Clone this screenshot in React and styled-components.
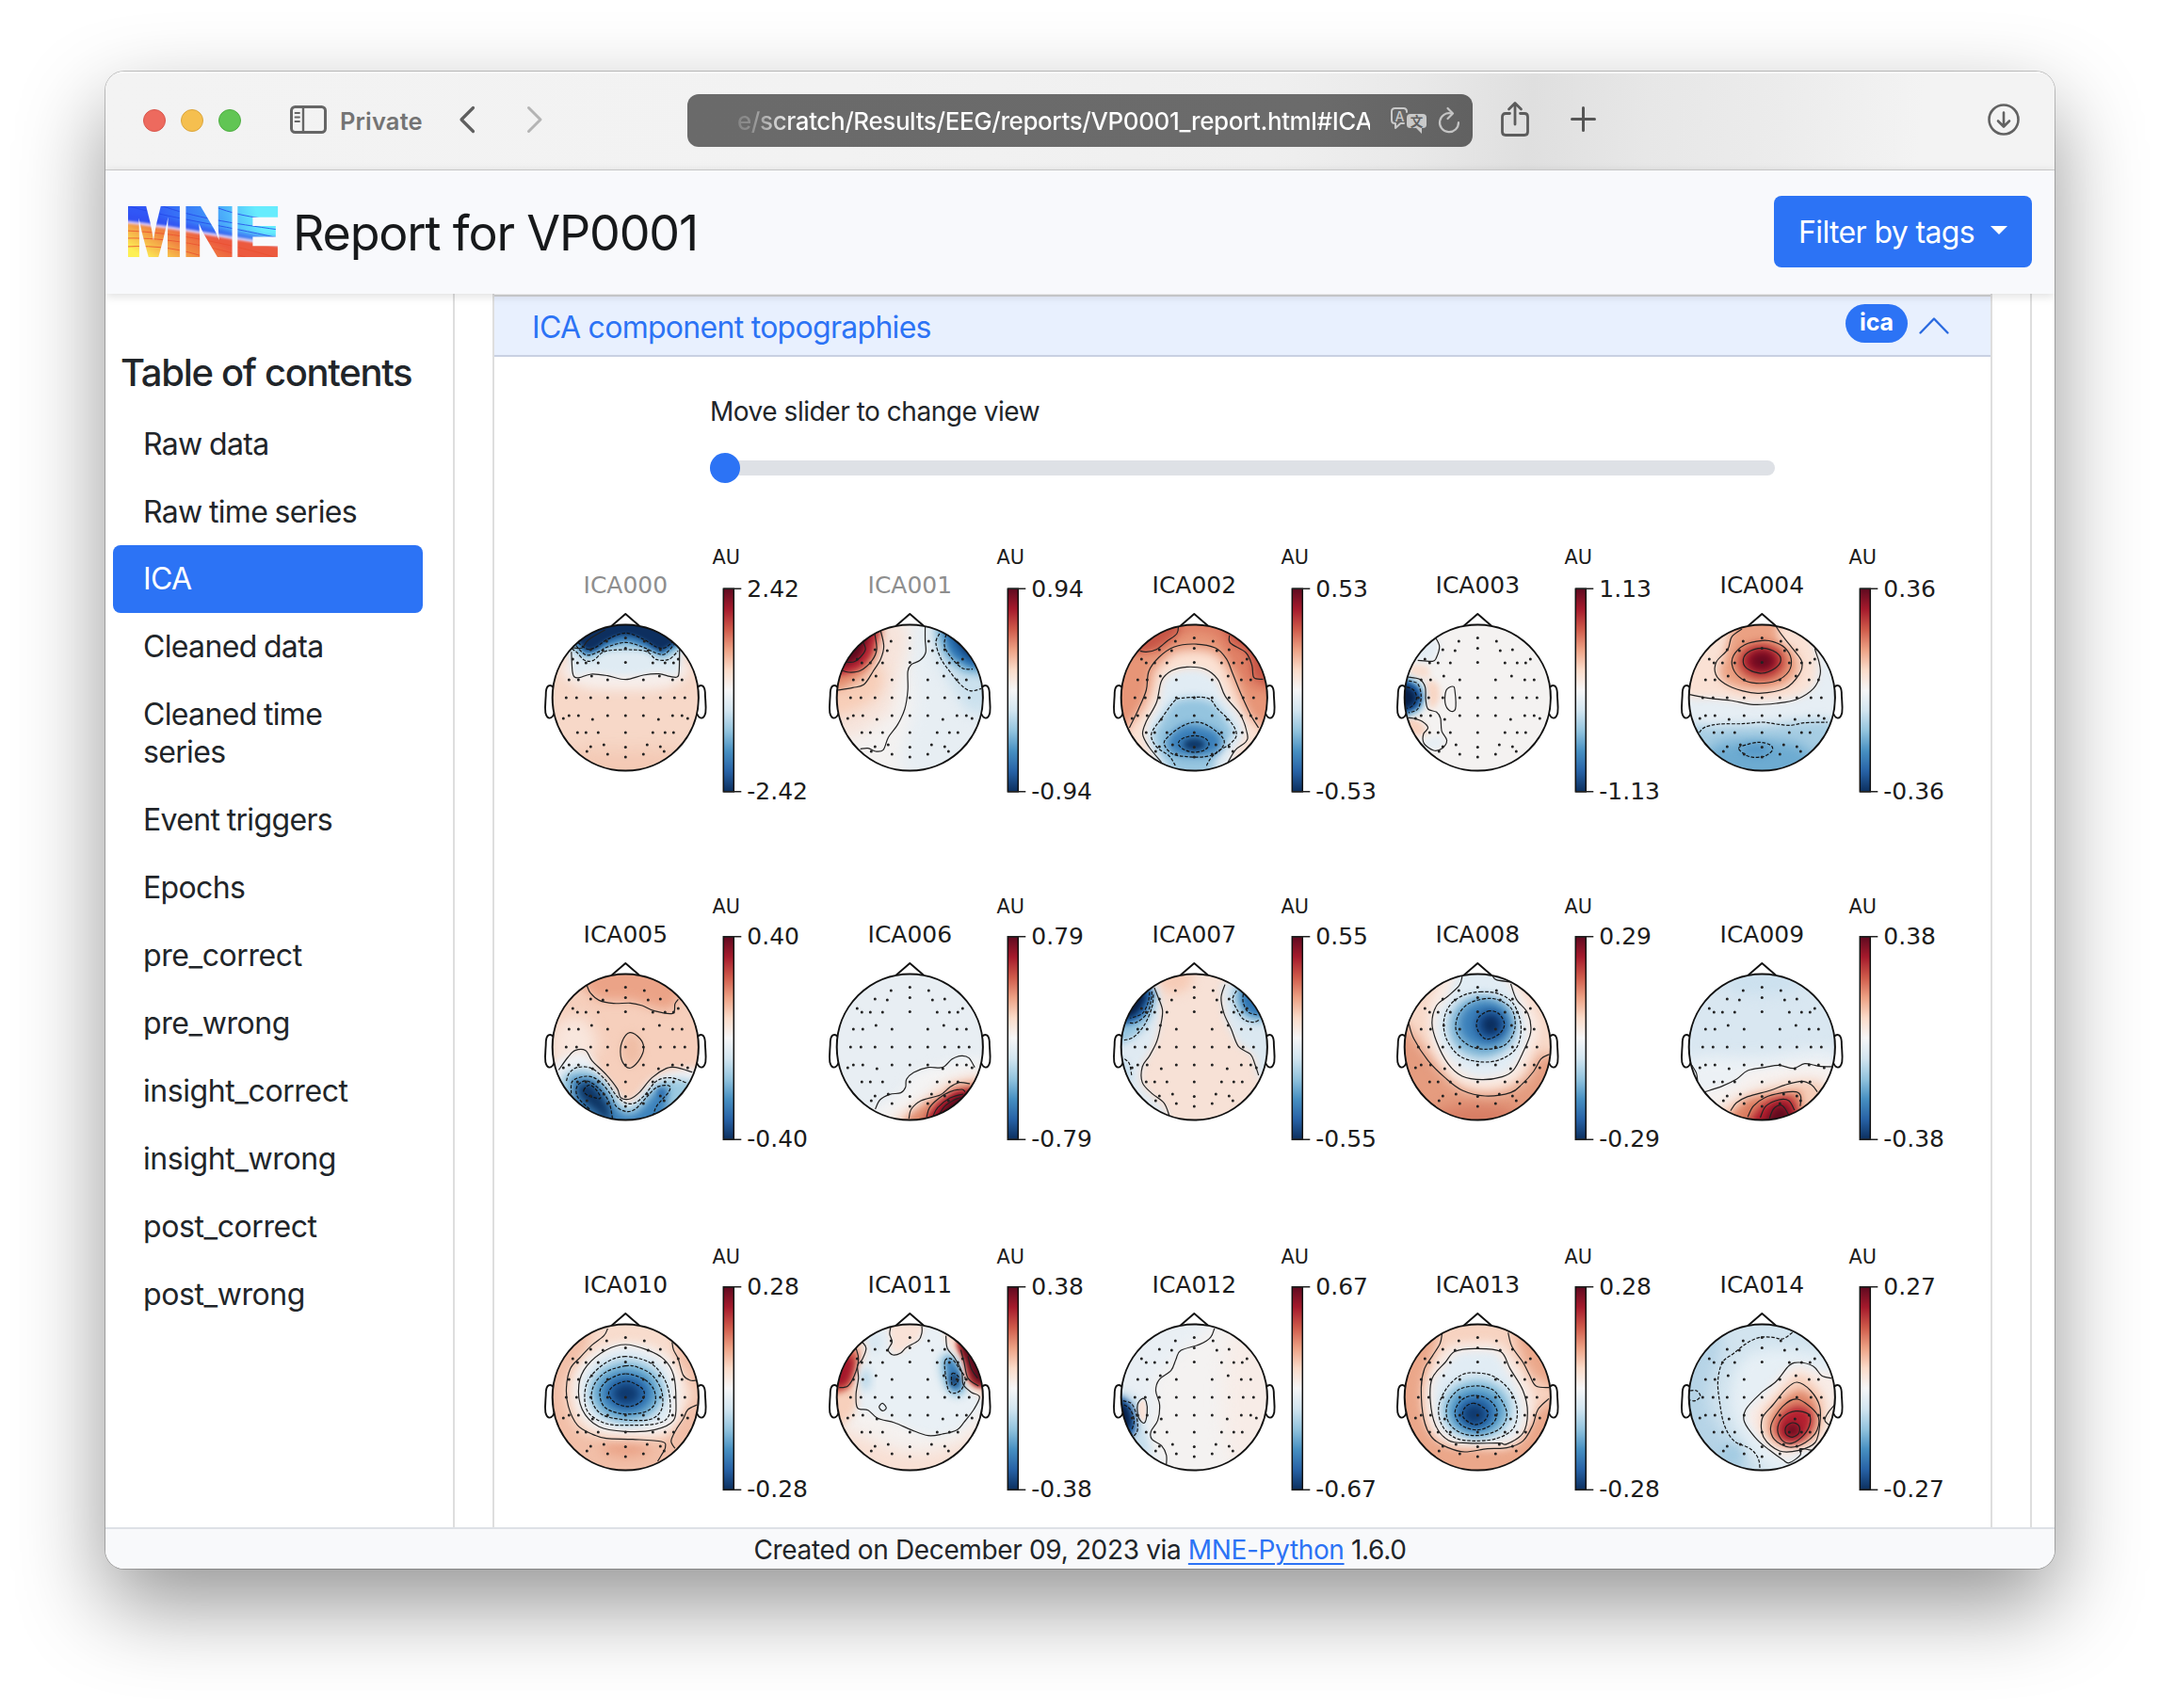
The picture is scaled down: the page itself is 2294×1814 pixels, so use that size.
import React from "react";
import styled, { createGlobalStyle } from "styled-components";

const BLUE = "#2c73f5";
const UI = `Inter, "Liberation Sans", sans-serif`;

const GlobalStyle = createGlobalStyle`
  * { box-sizing: border-box; }
  body { margin: 0; background: #fff; font-family: ${UI}; color: #212529; overflow: hidden; }
`;

const Page = styled.div`
  width: 2294px;
  height: 1814px;
  padding: 76px 0 0 112px;
  overflow: hidden;
`;

const BrowserWindow = styled.div`
  display: flex;
  flex-direction: column;
  width: 2070px;
  height: 1590px;
  border-radius: 20px;
  overflow: hidden;
  background: #fff;
  box-shadow: 0 0 0 1px rgba(0, 0, 0, 0.22), 0 38px 92px rgba(0, 0, 0, 0.42);
`;

const TitleBar = styled.div`
  display: flex;
  align-items: center;
  flex: none;
  height: 105px;
  border-bottom: 1px solid #cfcfcf;
  background: linear-gradient(95deg, #f3f3f3 0%, #f2f2f2 38%, #efefef 60%, #e9e9e9 67%, #dfdfdf 73%, #e7e7e7 79%, #ececec 86%, #f3f3f3 93%);
  box-shadow: inset 0 2px 0 #fafafa;
`;

const Lights = styled.div`
  display: flex;
  gap: 16px;
  margin-left: 40px;
`;

const Light = styled.span`
  width: 24px;
  height: 24px;
  border-radius: 50%;
  background: ${(p) => p.$fill};
  border: 1px solid ${(p) => p.$edge};
`;

const Icon = styled.svg`
  display: block;
  flex: none;
  width: ${(p) => p.$w}px;
  height: ${(p) => p.$h}px;
  margin-left: ${(p) => p.$ml || 0}px;
  margin-bottom: ${(p) => p.$mb || 0}px;
  fill: none;
  stroke: ${(p) => p.$color || "#666"};
  stroke-width: ${(p) => p.$sw || 3};
  stroke-linecap: round;
  stroke-linejoin: round;
  overflow: visible;
`;

const PrivateLabel = styled.span`
  width: 89px;
  margin-left: 14px;
  font-size: 25.5px;
  font-weight: 600;
  letter-spacing: 0.15px;
  color: #747474;
`;

const AddressBar = styled.div`
  display: flex;
  align-items: center;
  width: 834px;
  height: 56px;
  margin-left: 154px;
  padding-right: 14px;
  border-radius: 12px;
  background: linear-gradient(90deg, #6a6a6a 0%, #6b6b6b 80%, #616161 100%);
`;

const Address = styled.span`
  flex: none;
  width: 672px;
  margin-left: 53px;
  white-space: nowrap;
  font-size: 26px;
  font-weight: 500;
  letter-spacing: -0.41px;
  color: transparent;
  background: linear-gradient(90deg, #868686 0, #8f8f8f 15px, #fff 62px);
  -webkit-background-clip: text;
  background-clip: text;
`;

const ReportHeader = styled.header`
  display: flex;
  align-items: center;
  flex: none;
  position: relative;
  z-index: 1;
  height: 131px;
  padding: 0 24px;
  background: #f8f9fc;
  box-shadow: 0 2px 10px rgba(0, 0, 0, 0.14);
`;

const Title = styled.h1`
  margin: 2px auto 0 15px;
  font-size: 52px;
  font-weight: 400;
  letter-spacing: -1.17px;
  color: #17191b;
`;

const FilterButton = styled.button`
  display: flex;
  align-items: center;
  width: 274px;
  height: 76px;
  padding: 0 26px;
  margin-bottom: 1px;
  border: 0;
  border-radius: 8px;
  background: ${BLUE};
  color: #fff;
  font: 400 32px ${UI};
  letter-spacing: -0.62px;
  white-space: nowrap;
`;

const Caret = styled.span`
  margin: -4px 0 0 auto;
  border: 9px solid transparent;
  border-top-color: #fff;
  border-bottom: 0;
`;

const Body = styled.div`
  display: flex;
  flex: 1;
  min-height: 0;
`;

const Sidebar = styled.nav`
  flex: none;
  width: 371px;
  padding: 60px 32px 0 8px;
  border-right: 2px solid #dedede;
`;

const SidebarTitle = styled.h2`
  margin: 0 0 40px 8px;
  font-size: 40px;
  line-height: 48px;
  height: 24px;
  font-weight: 500;
  letter-spacing: -1.32px;
  white-space: nowrap;
`;

const TocItem = styled.a`
  display: block;
  padding: 16px 90px 16px 32px;
  margin-top: ${(p) => (p.$active ? -1 : 0)}px;
  border-radius: 8px;
  font-size: 32px;
  line-height: 40px;
  letter-spacing: ${(p) => (p.$tight ? -0.66 : -0.42)}px;
  word-spacing: -1px;
  white-space: ${(p) => (p.$wrap ? "normal" : "nowrap")};
  color: ${(p) => (p.$active ? "#fff" : "#212529")};
  background: ${(p) => (p.$active ? BLUE : "transparent")};
`;

const Main = styled.main`
  flex: 1;
  min-width: 0;
  margin-right: 24px;
  padding: 0 40px;
  border-right: 2px solid #dedede;
`;

const Accordion = styled.section`
  height: 100%;
  border: 2px solid #dedede;
  border-width: 0 2px;
  overflow: hidden;
`;

const AccordionHeader = styled.div`
  display: flex;
  align-items: center;
  height: 66px;
  margin-top: 1px;
  padding: 0 44px 0 40px;
  border-top: 2px solid #d2d3d5;
  border-bottom: 2px solid #c8d0e2;
  background: #e8f0fe;
  color: ${BLUE};
`;

const AccordionTitle = styled.span`
  padding-top: 3px;
  font-size: 32px;
  letter-spacing: -0.71px;
`;

const Badge = styled.span`
  display: flex;
  justify-content: center;
  align-items: center;
  width: 66px;
  height: 41px;
  margin: 0 12px 5px auto;
  border-radius: 21px;
  background: ${BLUE};
  color: #fff;
  font-size: 25px;
  font-weight: 700;
  padding-bottom: 3px;
`;

const SliderBlock = styled.div`
  width: 1131px;
  margin: 41px 0 0 229px;
  font-size: 28px;
  line-height: 34px;
  letter-spacing: -0.46px;
`;

const Track = styled.div`
  display: flex;
  align-items: center;
  height: 16px;
  margin-top: 35px;
  border-radius: 8px;
  background: #dee1e6;
`;

const Thumb = styled.span`
  width: 32px;
  height: 32px;
  border-radius: 50%;
  background: ${BLUE};
`;

const Figure = styled.div`
  display: grid;
  grid-template-columns: repeat(5, 301.75px);
  grid-auto-rows: 371.3px;
  margin: 65px 0 0 35px;
`;

const Topomap = styled.svg`
  width: 302px;
  height: 371px;
  overflow: visible;
  text { font-family: "DejaVu Sans", sans-serif; font-size: 25px; fill: #1c1c1c; }
`;

const Footer = styled.footer`
  display: flex;
  justify-content: center;
  align-items: center;
  flex: none;
  height: 44px;
  padding-top: 3px;
  border-top: 2px solid #dee1e6;
  background: #f8f9fb;
  font-size: 28px;
  line-height: 39px;
  letter-spacing: -0.35px;
  white-space: pre;
`;

const FooterLink = styled.a`
  color: ${BLUE};
  text-decoration: underline 2px;
  text-underline-offset: 4px;
`;

/* ---- topographic maps ---- */

/* Electrode layout, in pixels from the head centre. */
const HALF = [
  [-20, -60], [-37, -51], [-24, -50], [-56, -41], [-51, -37], [-42, -37], [-29, -37],
  [-36, -23], [-60, -19], [-50, -19], [-19, -19],
  [-63, 0], [-52, 0], [-37, 0], [-19, 0],
  [-60, 19], [-50, 19], [-19, 19], [-66, 22], [-35, 23],
  [-51, 37], [-42, 37], [-29, 37], [-23, 50], [-37, 52], [-41, 57], [-19, 60],
];
const MIDLINE = [-63.5, -52.5, -37.5, 0, 19, 37, 52.5, 63];
const SENSORS = [
  ...HALF,
  ...HALF.map(([x, y]) => [-x, y]),
  ...MIDLINE.map((y) => [0, y]),
];

/* Turns a list of traced points into a smooth path centred on the head. */
function curve(text, [scale, cx, cy]) {
  const closed = text.endsWith("z");
  const p = text.replace("z", "").trim().split(/\s+/).map((s) => {
    const [x, y] = s.split(",").map(Number);
    return [(x - cx) / scale, (y - cy) / 3];
  });
  const n = p.length;
  const at = (i) => (closed ? p[(i + n) % n] : p[Math.max(0, Math.min(n - 1, i))]);
  const f = (v) => v.toFixed(2);
  let d = `M${f(p[0][0])} ${f(p[0][1])}`;
  for (let i = 0; i < (closed ? n : n - 1); i += 1) {
    const [a, b, c, e] = [at(i - 1), at(i), at(i + 1), at(i + 2)];
    d += `C${f(b[0] + (c[0] - a[0]) / 6)} ${f(b[1] + (c[1] - a[1]) / 6)} ${f(c[0] - (e[0] - b[0]) / 6)} ${f(c[1] - (e[1] - b[1]) / 6)} ${f(c[0])} ${f(c[1])}`;
  }
  return closed ? `${d}Z` : d;
}

const oval = (x, y, rx, ry) =>
  Array.from({ length: 8 }, (_, i) => {
    const t = (i * Math.PI) / 4;
    return `${x + rx * Math.cos(t)},${y + ry * Math.sin(t)}`;
  }).join(" ") + "z";

const MAPS = [
  {
    name: "ICA000", max: "2.42", muted: true, at: [1.8447, 285, 1084], base: "#f7d8c8",
    fills: [
      ["#f6eeeb", 6, "160,1000 200,1050 285,1060 370,1050 410,1000 380,960 190,960z"],
      ["#f3c8b3", 10, "180,1260 285,1250 400,1260 380,1340 190,1340z"],
      ["#dfebf3", 3, "176,900 182,1000 190,1014 218,1003 285,1014 350,1003 382,1012 388,1000 394,900 285,840z"],
      ["#8dc0dc", 3, "170,890 182,930 205,958 222,958 240,938 262,930 310,930 330,938 345,955 370,955 400,890 285,820z"],
      ["#3579b5", 2, "170,880 190,918 208,945 232,935 250,920 285,905 318,920 345,939 362,942 390,890 285,810z"],
      ["#0d2f5f", 2, "160,870 192,905 208,930 225,928 250,900 285,884 320,900 345,926 362,927 400,870 285,800z"],
    ],
    lines: ["179,938 181,1000 185,1018 195,1020 218,1009 250,1014 285,1026 320,1012 350,1008 372,1016 386,1018 390,1000 391,930", "180,925 200,925 212,900 245,868"],
    dashed: [
      "180,928 190,940 205,965 222,965 240,940 262,932 310,932 330,940 345,962 370,962 388,935",
      "188,918 208,948 232,938 250,922 285,908 318,922 345,942 362,945 380,915",
      "192,908 208,928 225,925 250,898 285,878 320,898 345,922 362,925 378,905",
    ],
  },
  {
    name: "ICA001", max: "0.94", muted: true, at: [1.8447, 842, 1084], base: "#f4f2f1",
    fills: [
      ["#e7eef3", 8, "850,850 850,1100 830,1320 1000,1320 1000,850z"],
      ["#f6e3da", 8, "690,840 830,850 815,1050 790,1150 690,1200z"],
      ["#f7cdb7", 7, "690,950 740,1000 785,980 785,1060 740,1120 680,1130z"],
      ["#cbe1ee", 7, "895,850 900,960 930,1060 960,1130 1000,1100 1000,850z"],
      ["#e38c6e", 4, "690,1045 730,1035 765,990 783,920 780,850 690,860z"],
      ["#b42433", 3, "690,1000 735,998 762,960 772,920 776,850 690,860z"],
      ["#5f0a1e", 3, "700,975 735,965 752,925 756,880 690,870z"],
      ["#7db5d5", 4, "900,850 903,930 930,985 965,1010 1010,990 1000,850z"],
      ["#2d74b3", 3, "912,840 917,925 940,968 975,985 1010,900z"],
      ["#134580", 3, "922,840 935,920 970,965 1000,900z"],
    ],
    lines: [
      "785,872 791,920 785,960 770,1000 752,1042 730,1052 700,1060",
      "773,878 777,930 768,965 745,998 722,1003 708,996",
      "750,905 755,930 745,955 732,970 715,970",
      "872,858 872,900 873,940 862,965 845,978 838,1000 838,1060 832,1120 818,1170 800,1210 790,1250 775,1255 760,1245 745,1247",
    ],
    dashed: [
      "900,880 893,910 903,960 920,1000 940,1040 960,1062 982,1055",
      "913,882 910,920 925,960 945,990 965,993",
    ],
  },
  {
    name: "ICA002", max: "0.53", at: [1.8447, 1399, 1084], base: "#e79577",
    fills: [
      ["#df7f65", 5, "1260,860 1330,940 1380,880 1440,890 1480,990 1520,1060 1560,1030 1540,840 1399,840z"],
      ["#c65546", 4, "1270,930 1305,938 1345,905 1370,850 1270,840z"],
      ["#c65546", 4, "1465,850 1470,900 1505,945 1518,1020 1560,1030 1550,860z"],
      ["#fbe2d4", 6, "1260,1210 1296,1120 1312,1060 1320,1000 1340,965 1362,938 1399,930 1436,940 1456,970 1470,1010 1486,1070 1506,1140 1540,1200 1540,1340 1260,1340z"],
      ["#e1ecf4", 4, "1345,1330 1310,1240 1302,1200 1308,1160 1328,1100 1338,1030 1357,1005 1385,993 1420,1000 1443,1030 1458,1080 1488,1140 1498,1200 1480,1250 1450,1330z"],
      ["#94c4df", 5, "1362,1320 1325,1240 1320,1200 1340,1140 1362,1095 1399,1085 1436,1100 1465,1160 1476,1200 1445,1260 1430,1320z"],
      ["#3b80ba", 4, "1399,1170 1370,1180 1347,1220 1358,1260 1399,1270 1443,1258 1453,1225 1440,1190z"],
      ["#0e3768", 3, oval(1399, 1233, 22, 20)],
    ],
    lines: [
      "1272,1180 1290,1120 1305,1060 1310,1000 1330,955 1360,922 1399,913 1440,925 1462,960 1475,1010 1490,1070 1510,1140 1525,1180",
      "1335,1290 1310,1240 1298,1200 1305,1160 1325,1100 1335,1030 1355,998 1385,986 1420,993 1445,1025 1460,1080 1490,1140 1503,1200 1500,1225 1480,1250 1465,1290",
      "1368,855 1365,880 1345,905 1325,930 1305,938 1293,935",
      "1468,885 1470,910 1500,940 1512,980 1516,1020 1534,1025",
    ],
    dashed: [
      "1362,1300 1350,1270 1325,1240 1315,1200 1335,1150 1360,1095 1375,1085 1425,1085 1445,1120 1470,1160 1482,1200 1470,1230 1445,1255 1430,1280 1422,1305",
      "1399,1162 1375,1175 1350,1205 1340,1230 1355,1262 1385,1272 1420,1272 1445,1258 1458,1225 1445,1195 1420,1168z",
      "1399,1205 1375,1215 1368,1232 1380,1250 1400,1258 1420,1250 1428,1232 1420,1213z",
    ],
  },
  {
    name: "ICA003", max: "1.13", at: [1.6505, 677, 544], base: "#f4f2f1",
    fills: [
      ["#e4edf4", 4, "560,350 603,352 608,390 598,425 560,425z"],
      ["#f8ddcf", 3, "560,440 588,445 590,480 560,470z"],
      ["#f8d5c3", 3, "588,495 606,500 610,545 595,580z"],
      ["#f7d0bd", 3, "545,610 575,618 588,655 575,665 545,660z"],
      ["#e6eef4", 3, "583,690 600,670 620,680 600,710z"],
      ["#8dc0dc", 3, "540,482 570,488 584,520 584,565 570,595 540,600z"],
      ["#1f5fa6", 2, "540,492 565,500 578,528 577,562 566,582 540,590z"],
      ["#071f47", 3, "540,508 558,512 570,540 562,570 540,576z"],
    ],
    lines: [
      "603,352 610,380 605,415 598,428 572,425",
      "633,508 622,520 620,560 628,585 638,580 637,520z",
      "555,478 575,485 585,510 586,550 590,580 605,590 612,610 614,650 623,680 615,705 600,712 583,690 582,660 590,640 580,620 565,610 555,608",
    ],
    dashed: ["556,490 572,500 578,540 572,580 556,592", "553,510 565,520 570,545 563,570 553,578"],
  },
  {
    name: "ICA004", max: "0.36", at: [1.6505, 1175, 544], base: "#e6eef4",
    fills: [
      ["#fae1d4", 5, "1030,528 1100,545 1160,558 1230,543 1262,510 1272,450 1265,380 1240,280 1100,280 1030,400z"],
      ["#eba183", 5, "1135,280 1108,420 1100,460 1115,500 1160,520 1210,508 1238,460 1232,400 1205,360 1195,280z"],
      ["#cd5c4b", 4, oval(1174, 430, 46, 64)],
      ["#a2162a", 4, oval(1174, 427, 31, 41)],
      ["#690a20", 4, oval(1175, 427, 20, 26)],
      ["#a6cde3", 6, "1040,650 1100,636 1175,632 1310,630 1310,820 1040,820z"],
      ["#6dabd1", 7, "1090,700 1175,680 1250,705 1260,800 1090,800z"],
      ["#5698c7", 4, oval(1164, 710, 26, 20)],
    ],
    lines: [
      "1140,325 1122,350 1115,390 1095,430 1094,470 1110,500 1140,522 1170,530 1215,515 1240,470 1245,430 1230,390 1210,345 1200,318",
      "1175,362 1145,375 1125,410 1124,450 1140,485 1165,498 1200,490 1222,460 1226,420 1215,385 1195,366z",
      "1175,386 1150,400 1142,430 1152,455 1175,466 1198,450 1208,425 1200,400z",
      "1048,534 1080,545 1120,553 1160,566 1200,562 1235,550 1265,515 1277,470 1275,430 1268,390 1270,370",
    ],
    dashed: [
      "1065,655 1075,638 1100,628 1140,627 1175,622 1200,628 1225,632 1250,624 1290,622",
      "1134,705 1145,695 1170,686 1190,695 1193,712 1180,730 1160,734 1145,725z",
    ],
  },
  {
    name: "ICA005", max: "0.40", at: [1.96, 205, 547], base: "#f6cfbc",
    fills: [
      ["#eba387", 6, "110,300 135,380 160,398 215,400 265,420 300,425 320,360 300,280z"],
      ["#f8e6dd", 8, "60,480 110,450 140,500 140,570 60,600z"],
      ["#efbda5", 5, oval(218, 555, 20, 50)],
      ["#eef1f5", 4, "50,620 90,570 125,568 150,620 185,690 205,718 225,710 260,650 310,620 365,635 350,820 50,820z"],
      ["#9ccae1", 4, "70,660 98,620 130,620 170,672 200,735 230,728 262,672 292,652 350,670 330,820 80,820z"],
      ["#3c82bb", 4, "92,660 112,645 145,655 175,720 205,762 235,748 262,700 290,676 292,700 270,810 130,810z"],
      ["#0e3564", 4, "105,675 130,662 152,695 170,740 170,790 150,760 115,715z"],
      ["#2768aa", 3, oval(280, 692, 9, 16)],
    ],
    lines: [
      "125,352 132,375 150,398 180,408 215,407 240,415 265,432 303,440 308,410 315,395",
      "214,501 198,530 195,575 205,608 218,612 235,585 243,550 235,520z",
      "66,620 85,580 100,558 122,558 135,590 165,635 188,680 195,708 215,712 235,690 260,645 290,615 310,612 344,627",
    ],
    dashed: [
      "82,655 88,630 105,612 135,615 165,655 185,700 205,725 225,725 245,700 270,655 300,645 333,662",
      "92,695 95,655 125,640 150,655 175,700 185,735 205,752 225,745 250,705 270,675 295,670 295,690 270,735 262,770",
      "130,745 105,705 105,670 125,655 150,680 170,720 178,775",
      "118,685 130,668 145,685 153,710 140,708 125,700z",
    ],
  },
  {
    name: "ICA006", max: "0.79", at: [1.96, 797, 547], base: "#e8eef3",
    fills: [
      ["#f4f3f3", 6, "710,770 780,690 805,635 880,600 970,600 960,820 720,820z"],
      ["#f8dacb", 6, "760,800 825,712 890,650 970,650 960,820z"],
      ["#df886b", 4, "792,800 828,728 868,700 898,668 970,670 950,820z"],
      ["#ac1a2c", 3, "832,800 850,735 880,698 905,684 970,690 930,820z"],
      ["#5f0a1e", 3, "850,790 875,728 905,700 950,700 900,800z"],
    ],
    lines: [
      "725,745 735,715 755,698 778,693 788,675 790,650 805,628 835,612 865,612 885,585 905,575 920,582 932,612",
      "795,775 800,745 820,718 860,700 880,675 900,660 922,664",
      "832,770 838,740 858,710 880,690 905,682 912,690",
      "845,768 855,740 880,710 908,697",
      "858,762 870,735 890,715 903,708",
    ],
    dashed: [],
  },
  {
    name: "ICA007", max: "0.55", at: [1.96, 1388, 547], base: "#f7e1d6",
    fills: [
      ["#f6cbb6", 6, "1310,300 1380,300 1375,360 1330,370z"],
      ["#dfeaf2", 4, "1300,340 1317,430 1306,530 1280,610 1280,670 1330,770 1200,760 1200,350z"],
      ["#dbe8f1", 4, "1455,340 1448,400 1456,470 1484,540 1512,575 1525,650 1570,600 1560,350z"],
      ["#c2dbeb", 3, "1230,580 1250,600 1258,650 1230,640z"],
      ["#94c4df", 4, "1230,350 1305,380 1300,440 1280,490 1250,525 1220,525z"],
      ["#2468ad", 3, "1225,350 1300,365 1296,405 1278,455 1230,470z"],
      ["#071f47", 3, "1225,370 1284,375 1280,415 1258,450 1225,450z"],
      ["#84b9d8", 4, "1480,350 1472,400 1490,450 1520,468 1560,440 1540,350z"],
      ["#2f76b4", 3, "1495,350 1487,405 1508,442 1550,440z"],
    ],
    lines: [
      "1305,358 1312,385 1322,430 1318,480 1310,530 1295,575 1280,610 1280,660 1300,695 1325,725 1336,765",
      "1452,348 1444,390 1450,440 1465,490 1480,545 1505,570 1514,600 1522,637",
    ],
    dashed: [
      "1303,380 1300,420 1285,475 1262,515 1242,525",
      "1300,370 1298,400 1290,440 1268,468 1250,470",
      "1295,372 1292,405 1280,440 1255,455",
      "1476,368 1468,395 1478,430 1490,458 1510,468 1524,460",
      "1490,378 1490,405 1500,435 1520,445",
      "1243,585 1253,600 1258,640",
    ],
  },
  {
    name: "ICA008", max: "0.29", at: [1.6505, 677, 547], base: "#e59c7f",
    fills: [
      ["#d77c63", 8, oval(677, 780, 80, 50)],
      ["#f8d9c9", 7, "540,440 570,520 600,590 640,670 690,695 735,680 770,630 785,575 830,550 820,280 540,280z"],
      ["#f9ebe4", 5, "600,380 590,470 605,570 640,650 690,675 740,650 770,570 785,480 760,380 730,290 640,290z"],
      ["#e1ecf4", 4, "652,290 622,395 605,440 605,520 630,590 660,632 690,642 730,622 755,560 764,480 750,400 730,345 705,290z"],
      ["#84b9d8", 5, oval(685, 482, 60, 102)],
      ["#3b80ba", 5, oval(690, 474, 46, 74)],
      ["#174a8a", 4, oval(699, 476, 26, 46)],
      ["#0b2f60", 3, oval(700, 476, 13, 26)],
    ],
    lines: [
      "650,322 645,350 625,385 605,415 597,470 605,530 625,600 650,640 685,651 720,642 740,620 755,570 770,500 765,440 745,395 735,345",
      "703,320 710,333 735,340",
      "556,470 565,520 590,590 620,645 650,685 690,703 735,692 755,665 775,625 788,585 803,570",
    ],
    dashed: [
      "684,371 655,380 630,410 618,460 622,520 645,575 680,594 715,588 745,550 753,480 740,410 715,378z",
      "690,393 660,410 642,450 640,500 660,540 690,554 725,540 742,490 738,430 715,398z",
      "698,432 680,450 675,480 683,510 695,522 715,505 724,475 715,442z",
    ],
  },
  {
    name: "ICA009", max: "0.38", at: [1.6505, 1175, 547], base: "#d9e7f1",
    fills: [
      ["#cbe0ee", 8, oval(1175, 340, 70, 40)],
      ["#ecf1f5", 8, "1040,600 1175,580 1310,570 1310,820 1040,820z"],
      ["#f6f1ef", 5, "1060,710 1125,665 1160,625 1310,615 1310,820 1060,820z"],
      ["#f6cdb8", 6, "1095,760 1145,700 1240,655 1290,680 1270,820 1080,820z"],
      ["#dd8063", 4, "1120,800 1145,720 1185,700 1230,690 1243,700 1235,820z"],
      ["#b01c2d", 4, "1155,800 1172,740 1200,712 1228,712 1236,770 1220,810z"],
      ["#5f0a1e", 4, "1180,800 1197,742 1212,735 1226,770 1210,810z"],
    ],
    lines: [
      "1075,690 1105,672 1130,650 1150,622 1180,612 1205,605 1230,615 1250,600 1275,608 1300,610",
      "1120,750 1130,725 1150,705 1190,685 1215,668 1245,656 1262,668 1272,690",
      "1150,770 1160,735 1180,708 1210,693 1235,690 1243,705 1242,735",
      "1172,772 1182,735 1205,715 1222,718 1232,748",
      "1188,775 1195,745 1208,732 1216,745 1222,765",
      "1052,605 1060,630 1062,655",
    ],
    dashed: [],
  },
  {
    name: "ICA010", max: "0.28", at: [1.96, 205, 551], base: "#f2bfa8",
    fills: [
      ["#e99f83", 7, oval(205, 710, 50, 28)],
      ["#f8dccd", 6, "160,290 120,410 90,470 80,540 100,640 150,680 280,685 310,620 350,550 330,480 310,420 300,300z"],
      ["#f6efec", 5, "200,375 150,395 110,450 95,520 105,600 140,655 200,670 280,665 315,620 325,520 300,430 255,385z"],
      ["#e1ecf4", 4, "205,392 165,408 128,452 112,510 119,590 152,637 205,650 262,646 298,620 304,560 298,480 280,436 248,406z"],
      ["#98c7e0", 5, oval(208, 533, 80, 102)],
      ["#599ec9", 5, oval(207, 536, 65, 80)],
      ["#2869ab", 5, oval(208, 538, 48, 58)],
      ["#0f3a70", 4, oval(207, 540, 27, 33)],
    ],
    lines: [
      "168,332 160,355 135,385 110,425 90,460 82,520 86,580 105,640 135,668 165,682 220,685 280,692 288,710 280,735 272,755",
      "302,375 305,400 315,430 325,480 340,497 352,497",
      "354,575 335,590 325,620 310,655 300,690 308,714",
      "205,383 165,400 125,450 108,510 115,590 150,645 205,660 265,655 305,625 310,560 305,480 285,430 250,400z",
    ],
    dashed: [
      "205,421 165,440 130,490 120,545 128,600 165,635 215,640 270,635 295,610 297,550 285,490 255,440z",
      "205,451 165,470 140,510 135,560 155,605 200,622 255,622 280,590 280,530 260,480 230,455z",
      "205,476 170,495 152,530 160,580 195,603 240,600 265,575 265,530 245,495z",
      "205,500 180,515 170,540 185,570 215,580 240,560 243,530 225,508z",
    ],
  },
  {
    name: "ICA011", max: "0.38", at: [1.96, 797, 551], base: "#e9f0f5",
    fills: [
      ["#f5f1ef", 5, "630,600 720,605 765,632 835,673 900,655 935,600 980,580 960,820 640,820z"],
      ["#f8dfd3", 8, "630,640 700,680 800,730 900,700 960,640 960,820 640,820z"],
      ["#f9e2d7", 3, "755,310 758,370 758,405 775,410 792,392 818,360 822,310z"],
      ["#cfe2ee", 6, oval(725, 375, 12, 30)],
      ["#b3d4e7", 5, oval(705, 495, 10, 35)],
      ["#f7d0bc", 4, "640,350 700,380 698,430 685,470 684,590 630,640z"],
      ["#d2604f", 3, "640,420 685,400 688,440 680,485 668,525 635,530z"],
      ["#a5182b", 3, "640,430 676,425 676,470 662,510 635,510z"],
      ["#9ccae1", 4, "860,430 885,410 915,480 910,540 885,545 865,500z"],
      ["#3b80ba", 3, "872,435 885,432 909,490 903,525 886,528 876,490z"],
      ["#0e3564", 3, oval(889, 495, 8, 20)],
      ["#f9ddcf", 3, "875,340 882,395 905,440 909,500 930,535 970,560 980,380z"],
      ["#c2413c", 2, "895,370 910,440 920,500 945,522 980,500 960,360z"],
      ["#5f0a1e", 3, "905,380 915,440 930,495 950,510 980,470 950,370z"],
    ],
    lines: [
      "757,328 755,350 760,375 752,400 762,416 778,410 790,392 815,370 822,345 822,325",
      "698,375 706,395 698,430 688,450 690,490 685,540 688,585 710,592 730,618 765,632 800,655 835,673 865,668 895,655 910,630 930,590 942,550 925,535 908,510 905,470 890,425 875,395 872,355",
      "740,570 733,582 740,594 748,585z",
      "685,395 690,430 682,480 668,515 650,520",
      "903,400 910,440 918,490 940,515",
      "918,420 925,460 938,490",
    ],
    dashed: ["870,435 885,430 900,460 912,490 905,525 890,538 878,530 872,490z", "885,475 898,485 895,505 885,512z"],
  },
  {
    name: "ICA012", max: "0.67", at: [1.96, 1388, 551], base: "#f4f2f1",
    fills: [
      ["#f7ece7", 9, "1480,300 1450,550 1480,800 1600,800 1600,300z"],
      ["#e9eff4", 6, "1425,290 1355,410 1305,500 1310,580 1295,680 1325,800 1200,800 1200,290z"],
      ["#c5ddec", 4, "1230,540 1270,560 1282,640 1295,730 1230,700z"],
      ["#f8e2d8", 1, "1280,560 1272,580 1274,612 1283,628 1288,600 1286,568z"],
      ["#1f5fa6", 3, "1225,555 1252,565 1264,610 1264,665 1230,680z"],
      ["#071f47", 3, "1225,575 1247,580 1256,615 1253,650 1230,650z"],
    ],
    lines: [
      "1430,332 1422,360 1400,382 1360,402 1350,430 1340,465 1315,495 1308,530 1316,575 1312,625 1298,660 1300,685 1320,705 1330,735 1330,765",
      "1280,555 1270,575 1272,615 1284,633 1290,600 1288,565z",
    ],
    dashed: ["1240,562 1258,572 1268,610 1270,655 1262,675", "1242,575 1255,590 1263,625 1258,655"],
  },
  {
    name: "ICA013", max: "0.28", at: [1.4519, 595, 551], base: "#eba78a",
    fills: [
      ["#f7d3c1", 6, "550,280 525,420 510,520 515,620 540,690 595,712 650,700 685,600 720,540 680,480 660,400 640,280z"],
      ["#f8ebe5", 5, "590,375 550,390 525,460 514,550 522,650 550,700 595,708 650,700 678,620 680,540 650,430 625,380z"],
      ["#e1ecf4", 4, "590,405 563,413 548,445 530,495 527,560 535,640 555,678 585,688 635,688 658,660 665,600 658,530 640,465 623,412z"],
      ["#98c7e0", 5, oval(594, 588, 54, 97)],
      ["#599ec9", 4, oval(593, 593, 43, 75)],
      ["#2869ab", 4, oval(592, 600, 30, 54)],
      ["#0f3a70", 4, oval(590, 605, 17, 32)],
    ],
    lines: [
      "540,350 537,380 525,420 513,460 508,520 512,620 525,680 550,712 575,725 610,715 640,712 665,690 680,640 688,590 705,555",
      "642,345 648,390 665,440 675,480 685,515 705,520",
      "590,396 560,405 545,440 525,490 522,560 530,640 550,688 580,697 628,697 640,700 665,665 672,600 665,530 645,460 630,405z",
    ],
    dashed: [
      "592,473 570,480 548,520 535,580 540,640 560,680 590,690 625,682 650,650 656,590 645,530 620,485z",
      "590,515 565,528 548,575 550,630 570,665 600,672 630,650 640,600 625,540 610,520z",
      "590,545 570,560 560,600 570,640 595,655 618,635 625,595 612,558z",
      "590,570 575,585 573,615 590,638 606,625 610,595z",
    ],
  },
  {
    name: "ICA014", max: "0.27", at: [1.4519, 1033, 551], base: "#d2e4ef",
    fills: [
      ["#b5d3e6", 8, "900,340 970,360 950,560 985,700 1015,820 900,800z"],
      ["#9fc9e1", 7, oval(987, 735, 18, 36)],
      ["#e6eff5", 7, "1010,420 1080,400 1150,460 1160,720 1060,790 1000,660 985,540z"],
      ["#f8ece7", 4, "1088,448 1062,480 1040,535 1013,590 1012,630 1035,690 1070,748 1090,720 1150,660 1160,500 1112,465z"],
      ["#f7cfbb", 5, "1087,480 1055,545 1033,600 1035,670 1062,712 1105,706 1128,650 1130,560 1110,500z"],
      ["#df886b", 4, "1087,530 1062,565 1045,620 1047,670 1070,700 1100,690 1117,650 1118,580 1105,540z"],
      ["#b42030", 4, "1086,580 1065,605 1056,650 1063,685 1082,695 1100,675 1110,635 1107,595z"],
      ["#5f0a1e", 4, oval(1080, 655, 10, 20)],
    ],
    lines: [
      "1140,490 1125,482 1112,452 1090,440 1075,450 1055,500 1030,540 1008,590 1006,630 1025,685 1045,720 1065,750 1075,760 1092,735 1092,715 1110,720",
      "1087,503 1070,525 1050,575 1033,620 1036,680 1060,722 1090,720 1115,695 1122,640 1122,580 1108,530z",
      "1088,557 1065,580 1047,640 1052,685 1075,710 1100,695 1118,655 1118,605z",
      "1085,595 1065,615 1057,655 1065,690 1080,697 1098,670 1107,635 1105,605z",
      "1080,632 1070,645 1070,668 1080,678 1090,665 1090,642z",
      "1145,575 1135,600 1130,625 1140,645",
    ],
    dashed: [
      "1080,345 1065,365 1050,360 1030,360 1010,378 990,410 972,440 965,500 968,570 975,640 990,690 1015,715 1027,745 1030,780",
      "922,530 932,530 938,548 930,562 922,560",
    ],
  },
];

const BLURS = [1, 2, 3, 4, 5, 6, 7, 8, 9, 10];
const SCALE = ["#5f0a20", "#a51a2c", "#cf5a4a", "#eda184", "#fadbc9", "#f6f6f7", "#d2e5f0", "#93c4de", "#4790c2", "#2762a6", "#0c2f5e"];

const DefsHolder = styled.svg`
  display: block;
  width: 0;
  height: 0;
`;

function SharedDefs() {
  return (
    <DefsHolder>
      <defs>
        <clipPath id="head"><circle r="77.6" /></clipPath>
        <linearGradient id="rdbu" x1="0" y1="0" x2="0" y2="1">
          {SCALE.map((c, i) => <stop key={c} offset={i / 10} stopColor={c} />)}
        </linearGradient>
        {BLURS.map((b) => (
          <filter key={b} id={`soft${b}`} x="-60%" y="-60%" width="220%" height="220%" colorInterpolationFilters="sRGB">
            <feGaussianBlur stdDeviation={b} />
          </filter>
        ))}
      </defs>
    </DefsHolder>
  );
}

const MapName = styled.text`
  && { fill: ${(p) => (p.$muted ? "#8e8e8e" : "#1c1c1c")}; }
`;

const UnitLabel = styled.text`
  && { font-size: 20.8px; }
`;

function TopoPlot({ map, row }) {
  const top = row === 0 ? -115.7 : -117.2;
  return (
    <Topomap viewBox="0 0 302 371">
      <g transform="translate(104.3 171)">
        <g fill="#fff" stroke="#111" strokeWidth="1.9" strokeLinejoin="round">
          <path d="M-15 -76L0 -89L15 -76" />
          <path d="M-76.5 -11C-80 -15 -84 -13 -84.5 -6C-84.5 3 -86 8 -85 16C-83 24 -78 23 -75.5 16" />
          <path d="M76.5 -11C80 -15 84 -13 84.5 -6C84.5 3 86 8 85 16C83 24 78 23 75.5 16" />
        </g>
        <g clipPath="url(#head)">
          <circle r="78" fill={map.base} />
          {map.fills.map(([color, blur, d]) => (
            <path key={color + d} d={curve(d, map.at)} fill={color} filter={`url(#soft${blur})`} />
          ))}
          <g fill="none" stroke="#222" strokeWidth="1.2">
            {map.lines.map((d) => <path key={d} d={curve(d, map.at)} />)}
            <g strokeDasharray="3.6 1.7" stroke="#111">
              {map.dashed.map((d) => <path key={d} d={curve(d, map.at)} />)}
            </g>
          </g>
        </g>
        <circle r="77.6" fill="none" stroke="#111" strokeWidth="2" />
        {SENSORS.map(([x, y]) => <circle key={`${x},${y}`} cx={x} cy={y} r="1.5" fill="#222" />)}
        <MapName x="0" y="-111" textAnchor="middle" textLength="89.500" lengthAdjust="spacingAndGlyphs" $muted={map.muted}>{map.name}</MapName>
        <UnitLabel x="107" y="-141.700" textAnchor="middle">AU</UnitLabel>
        <rect x="104" y={top} width="11" height="215.5" fill="url(#rdbu)" stroke="#111" strokeWidth="1.5" />
        <path d={`M104 ${top}H123M104 ${top + 215.5}H123`} stroke="#222" strokeWidth="1.6" />
        <text x="129" y={top + 8.6}>{map.max}</text>
        <text x="129" y={top + 223.6}>-{map.max}</text>
      </g>
    </Topomap>
  );
}

const LogoText = styled.text`
  font-family: Inter, sans-serif;
  font-weight: 900;
  font-size: 74.2px;
`;

function Logo() {
  return (
    <svg width="160" height="56" viewBox="0 0 160 56">
      <defs>
        <clipPath id="mne">
          <LogoText x="-4" y="54" textLength="62" lengthAdjust="spacingAndGlyphs">M</LogoText>
          <LogoText x="58" y="54" textLength="56" lengthAdjust="spacingAndGlyphs">N</LogoText>
          <LogoText x="112.500" y="54" textLength="50" lengthAdjust="spacingAndGlyphs">E</LogoText>
        </clipPath>
        <linearGradient id="logoBlue" gradientUnits="userSpaceOnUse" x1="30" y1="24" x2="130" y2="-12">
          <stop offset="0" stopColor="#3157f6" /><stop offset="0.5" stopColor="#3d8cf8" /><stop offset="1" stopColor="#66ecfd" />
        </linearGradient>
        <linearGradient id="logoWarm" gradientUnits="userSpaceOnUse" x1="64" y1="20" x2="38" y2="66">
          <stop offset="0" stopColor="#ec5a3f" /><stop offset="0.45" stopColor="#f18a42" /><stop offset="1" stopColor="#fdf055" />
        </linearGradient>
      </defs>
      <g clipPath="url(#mne)">
        <rect width="160" height="56" fill="url(#logoBlue)" />
        <path d="M-5 12C50 18 100 32 165 38" fill="none" stroke="#314cf0" strokeWidth="9" opacity="0.6" filter="url(#soft2)" />
        <path d="M-5 17C50 22 100 33 165 43V60H-5Z" fill="url(#logoWarm)" />
        <path d="M-5 16.5C50 22 100 33 165 42" fill="none" stroke="#e2c9ee" strokeWidth="3" filter="url(#soft1)" />
        <g fill="none" stroke="#2446e8" strokeWidth="1" opacity="0.8">
          <path d="M-2 -1C40 12 100 20 160 34" /><path d="M34 -1C70 12 110 18 160 25" /><path d="M88 -1C110 8 130 12 160 15" />
        </g>
        <g fill="none" stroke="#ea5030" strokeWidth="1" opacity="0.8">
          <path d="M-2 26C50 28 110 40 162 56" /><path d="M-2 34C40 33 90 42 130 56" /><path d="M-2 43C30 41 60 46 84 55" />
        </g>
      </g>
    </svg>
  );
}

const TOC = [
  "Raw data", "Raw time series", "ICA", "Cleaned data", "Cleaned time series", "Event triggers", "Epochs",
  "pre_correct", "pre_wrong", "insight_correct", "insight_wrong", "post_correct", "post_wrong",
];

export default function App() {
  return (
    <Page>
      <GlobalStyle />
      <SharedDefs />
      <BrowserWindow>
        <TitleBar>
          <Lights>
            <Light $fill="#ed6a5e" $edge="#d9574d" />
            <Light $fill="#f5bf4f" $edge="#dba63e" />
            <Light $fill="#61c554" $edge="#4fae42" />
          </Lights>
          <Icon $w={39} $h={30} $ml={52} $mb={2} viewBox="0 0 39 30">
            <rect x="1.5" y="1.5" width="36" height="27" rx="4" />
            <path d="M14 1.5V28.5" strokeWidth="2.4" />
            <path d="M5.5 8H10M5.5 12.5H10M5.5 17H10" strokeWidth="1.8" />
          </Icon>
          <PrivateLabel>Private</PrivateLabel>
          <Icon $w={16} $h={28} $ml={38} $mb={2} $sw={3.2} $color="#5f5f5f" viewBox="0 0 16 28"><path d="M14.5 1.5L2 14L14.5 26.5" /></Icon>
          <Icon $w={16} $h={28} $ml={56} $mb={2} $sw={3} $color="#b4b4b4" viewBox="0 0 16 28"><path d="M1.5 1.5L14 14L1.5 26.5" /></Icon>
          <AddressBar>
            <Address>e/scratch/Results/EEG/reports/VP0001_report.html#ICA</Address>
            <Icon $w={38} $h={28} $ml={22} $sw={2} $color="#c9c9c9" viewBox="0 0 38 28">
              <path d="M17 5V4.5Q17 1 13.500 1H4.500Q1 1 1 4.500V13.500Q1 17 4.500 17H5V22L10.500 17H14" />
              <path d="M21 7H34Q38 7 38 11V18.500Q38 22 34 22H33V28L27 22H21Q17 22 17 18.500V11Q17 7 21 7Z" fill="#c9c9c9" stroke="none" />
              <text x="9.500" y="14.500" textAnchor="middle" fontFamily="Inter" fontSize="14" fontWeight="500" fill="#c9c9c9" stroke="none">A</text>
              <text x="27.500" y="19.500" textAnchor="middle" fontFamily="Noto Sans CJK SC" fontSize="13.500" fontWeight="700" fill="#5f5f5f" stroke="none">文</text>
            </Icon>
            <Icon $w={22} $h={28} $ml={13} $sw={2.2} $color="#c4c4c4" viewBox="0 0 22 28">
              <path d="M13.500 6.500A10 10 0 1 0 21 16" /><path d="M9.500 1L15 6.500L9.500 12" />
            </Icon>
          </AddressBar>
          <Icon $w={30} $h={37} $ml={30} $mb={4} $sw={2.8} $color="#5c5c5c" viewBox="0 0 30 37">
            <path d="M9.500 12.500H5Q1.500 12.500 1.500 16V32Q1.500 35.500 5 35.500H25Q28.500 35.500 28.500 32V16Q28.500 12.500 25 12.500H20.500" />
            <path d="M15 24V2M8.500 8L15 1.500L21.500 8" />
          </Icon>
          <Icon $w={27} $h={27} $ml={44} $mb={3} $sw={3} $color="#555" viewBox="0 0 27 27"><path d="M13.500 1.500V25.500M1.500 13.500H25.500" /></Icon>
          <Icon $w={34} $h={34} $ml={416} $mb={2} $sw={2.6} $color="#626262" viewBox="0 0 34 34">
            <circle cx="17" cy="17" r="15.500" /><path d="M17 9.500V24M11 18.500L17 24.500L23 18.500" />
          </Icon>
        </TitleBar>
        <ReportHeader>
          <Logo />
          <Title>Report for VP0001</Title>
          <FilterButton>Filter by tags<Caret /></FilterButton>
        </ReportHeader>
        <Body>
          <Sidebar>
            <SidebarTitle>Table of contents</SidebarTitle>
            {TOC.map((t) => (
              <TocItem key={t} $active={t === "ICA"} $wrap={t === "Cleaned time series"} $tight={!t.includes("_")}>{t}</TocItem>
            ))}
          </Sidebar>
          <Main>
            <Accordion>
              <AccordionHeader>
                <AccordionTitle>ICA component topographies</AccordionTitle>
                <Badge>ica</Badge>
                <Icon $w={32} $h={18} $color="#2a6ae0" $sw={2.4} viewBox="0 0 32 18"><path d="M1.500 16.500L16 1.500L30.500 16.500" /></Icon>
              </AccordionHeader>
              <SliderBlock>
                Move slider to change view
                <Track><Thumb /></Track>
              </SliderBlock>
              <Figure>
                {MAPS.map((m, i) => <TopoPlot key={m.name} map={m} row={Math.floor(i / 5)} />)}
              </Figure>
            </Accordion>
          </Main>
        </Body>
        <Footer>Created on December 09, 2023 via <FooterLink>MNE-Python</FooterLink> 1.6.0</Footer>
      </BrowserWindow>
    </Page>
  );
}
